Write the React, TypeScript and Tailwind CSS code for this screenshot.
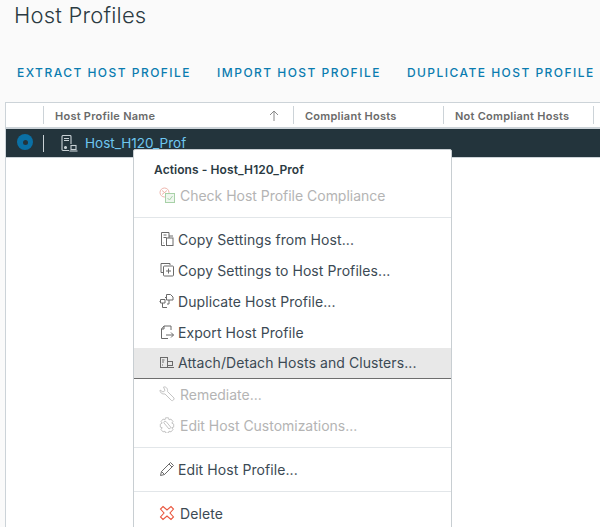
import React from "react";

const font = "font-['Inter','Liberation_Sans',sans-serif]";

const IconBase = ({ children, muted }: { children: React.ReactNode; muted?: boolean }) => (
  <svg
    width="16"
    height="16"
    viewBox="0 0 16 16"
    fill="none"
    stroke={muted ? "#c4c4c4" : "#6a6a6a"}
    strokeWidth="1"
    className="shrink-0"
  >
    {children}
  </svg>
);

const HostIcon = () => (
  <svg width="17" height="17" viewBox="0 0 17 17" fill="none" stroke="#c9d1d5" strokeWidth="1.1">
    <path d="M8 15.500H2a1 1 0 0 1-1-1v-13a1 1 0 0 1 1-1h7a1 1 0 0 1 1 1V9" />
    <path d="M3 3.500h5M3 5.500h5" />
    <circle cx="4.500" cy="12.500" r="1" fill="#c9d1d5" />
    <rect x="10" y="10.500" width="5" height="4" />
    <path d="M8.500 16h8" />
  </svg>
);

const CheckIcon = () => (
  <svg width="17" height="17" viewBox="0 0 17 17" fill="none" className="shrink-0">
    <circle cx="5.500" cy="5.500" r="4.500" stroke="#eeb5ac" />
    <path d="M3 3.500l5 4M8 3.500l-5 4" stroke="#eeb5ac" />
    <rect x="6.500" y="6.500" width="9" height="9" fill="#eef6ee" stroke="#a8d1a8" />
    <path d="M8.500 11l2 2 3-4" stroke="#a8d1a8" />
  </svg>
);

const CopyFromIcon = () => (
  <IconBase>
    <path d="M10 5V1.500H2.500v13H6" />
    <path d="M4.500 4h3M4.500 6.500h3M4.500 12h.5" />
    <rect x="7.500" y="7" width="6.500" height="7.500" />
    <path d="M10 7V5h4" />
  </IconBase>
);

const CopyToIcon = () => (
  <IconBase>
    <path d="M11 3V1.500H2v9h2" />
    <rect x="4.500" y="4" width="10" height="10" rx="1" />
    <path d="M9.500 6.500v5M7 9h5" />
  </IconBase>
);

const DuplicateIcon = () => (
  <IconBase>
    <path d="M7.500 1.500h4l2.500 2.500v3H7.500z" />
    <path d="M1.500 6.500h4.500v3.500H1.500zM3.500 10v4.500H8" />
    <path d="M.5 8.500h1M6 4.500h1.500M10 7v4H8" />
  </IconBase>
);

const ExportIcon = () => (
  <IconBase>
    <path d="M12 6V2H5L2.500 5v9.500H9" />
    <path d="M5 2v3H2.500" />
    <path d="M7 11h7.500M12 8.500l2.500 2.500-2.500 2.500" />
  </IconBase>
);

const AttachIcon = () => (
  <IconBase>
    <rect x="1.500" y="2.500" width="7" height="10" />
    <path d="M3 5h2.500M3 7h2M3 10h1" />
    <rect x="8.500" y="6.500" width="5" height="4" />
    <path d="M8 12.500h7" />
  </IconBase>
);

const WrenchIcon = () => (
  <IconBase muted>
    <path d="M1 4l3 2 2-1.500-1.500-3.500C7 .3 9 2.500 8.500 5.500l6.500 6.500c.7 1.200-1.300 3.300-2.500 2.500L6 8C3 8.500.8 6.500 1 4z" />
  </IconBase>
);

const CogIcon = () => (
  <IconBase muted>
    <path d="M6.500 .8h3l.5 2 2-.7 2 2.500-1.200 1.500 1.900 1v3l-1.900.6 1.200 1.800-2 2.400-2-.7-.5 1.800h-3l-.5-1.800-2 .7-2-2.400 1.200-1.800-1.900-.6v-3l1.900-1-1.200-1.500 2-2.500 2 .7z" />
    <path d="M5 6l5 6 2-1.500-5-6C5.500 3.800 4.300 5 5 6z" />
  </IconBase>
);

const PencilIcon = () => (
  <IconBase>
    <path d="M11.500 1.500l3 3L5.500 13.500l-4 1 1-4z" />
    <path d="M10 3l3 3M2.500 10.500l3 3" />
  </IconBase>
);

const DeleteIcon = () => (
  <svg width="16" height="16" viewBox="0 0 16 16" fill="none" stroke="#e9573f" strokeWidth="1.100" className="shrink-0">
    <path d="M4 1.500L8 5l4-3.500 2.500 2.500L11 8l3.500 4-2.500 2.500L8 11l-4 3.500L1.500 12 5 8 1.500 4z" />
  </svg>
);

const Divider = () => <div className="my-[6px] h-px shrink-0 bg-[#e2e6e9]" />;

const MenuItem = ({
  icon,
  label,
  disabled,
  active,
  indent,
}: {
  icon: React.ReactNode;
  label: string;
  disabled?: boolean;
  active?: boolean;
  indent?: boolean;
}) => (
  <div
    className={`flex h-[31px] shrink-0 items-center pb-[1px] pl-[25px] text-[14px] ${
      active ? "border-b border-[#6e6e6e] bg-[#e8e8e8]" : ""
    } ${disabled ? "tracking-[-0.02px] text-[#b4b4b4]" : "tracking-[0.08px] text-[#3c4a54]"}`}
  >
    <span className={`flex w-[16px] justify-center ${indent ? "mr-[5px]" : "mr-[3px]"}`}>{icon}</span>
    {label}
  </div>
);

const HeaderCell = ({ label, className }: { label: string; className: string }) => (
  <div className={`flex h-[18px] items-center border-r border-[#ccd3d8] pl-[11px] ${className}`}>
    <span className="translate-y-[1px]">{label}</span>
  </div>
);

export default function App() {
  return (
    <div className={`relative h-[527px] w-[600px] overflow-hidden bg-[#fafafa] ${font}`}>
      <h1 className="pl-[14px] text-[22px] font-light leading-[30px] tracking-[0.2px] text-[#2b3a42]">
        Host Profiles
      </h1>

      <div className="mt-[34px] flex gap-[26px] whitespace-nowrap pl-[17px] text-[12px] font-medium leading-[18px] tracking-[1.47px] text-[#0a7cb0]">
        <span>EXTRACT HOST PROFILE</span>
        <span>IMPORT HOST PROFILE</span>
        <span>DUPLICATE HOST PROFILE</span>
      </div>

      <div className="ml-[5px] mt-[20px] h-[425px] w-[595px] border-l border-t border-[#ccd3d8] bg-white">
        <div className="flex h-[26px] items-center border-b-2 border-[#ccd3d8] text-[11px] font-semibold tracking-[0.25px] text-[#6a6a6a]">
          <div className="h-[18px] w-[38px] border-r border-[#ccd3d8]" />
          <HeaderCell label="Host Profile Name" className="w-[250px]" />
          <HeaderCell label="Compliant Hosts" className="w-[150px]" />
          <HeaderCell label="Not Compliant Hosts" className="w-[150px]" />
        </div>
        <div className="flex h-[29px] items-center border-b border-[#ccd3d8] bg-[#23343c]">
          <div className="ml-[11px] flex h-4 w-4 -translate-y-[1px] items-center justify-center rounded-full bg-[#0a70a5]">
            <div className="h-[5px] w-[5px] rounded-full bg-[#23343c]" />
          </div>
          <div className="ml-[10px] h-[17px] w-px bg-[#c9d1d5]" />
          <div className="ml-[17px] flex items-center gap-[7px] text-[13.5px] text-[#6ec6f0]">
            <HostIcon />
            Host_H120_Prof
          </div>
        </div>
      </div>

      <svg
        width="10"
        height="11"
        viewBox="0 0 10 11"
        fill="none"
        stroke="#8a8a8a"
        strokeWidth="1"
        className="absolute left-[269px] top-[110px]"
      >
        <path d="M5 11V1M1 5l4-4 4 4" />
      </svg>

      <div className="absolute left-[133px] top-[149px] flex h-[400px] w-[319px] flex-col rounded-[2px] border border-[#c8ced2] bg-white">
        <div className="pl-[20px] pt-[12px] text-[12px] font-semibold leading-[16px] tracking-[0.08px] text-[#2b3a42]">
          Actions - Host_H120_Prof
        </div>
        <div className="mt-[2px]">
          <MenuItem icon={<CheckIcon />} label="Check Host Profile Compliance" disabled indent />
        </div>
        <Divider />
        <MenuItem icon={<CopyFromIcon />} label="Copy Settings from Host..." />
        <MenuItem icon={<CopyToIcon />} label="Copy Settings to Host Profiles..." />
        <MenuItem icon={<DuplicateIcon />} label="Duplicate Host Profile..." />
        <MenuItem icon={<ExportIcon />} label="Export Host Profile" />
        <MenuItem icon={<AttachIcon />} label="Attach/Detach Hosts and Clusters..." active />
        <MenuItem icon={<WrenchIcon />} label="Remediate..." disabled indent />
        <MenuItem icon={<CogIcon />} label="Edit Host Customizations..." disabled indent />
        <Divider />
        <MenuItem icon={<PencilIcon />} label="Edit Host Profile..." />
        <Divider />
        <MenuItem icon={<DeleteIcon />} label="Delete" indent />
      </div>
    </div>
  );
}
